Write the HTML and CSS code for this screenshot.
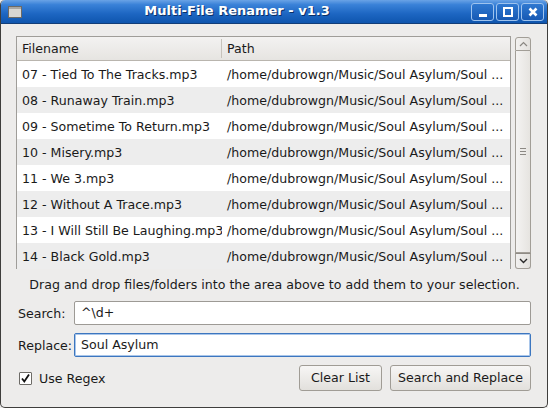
FILE: index.html
```html
<!DOCTYPE html>
<html>
<head>
<meta charset="utf-8">
<link rel="stylesheet" href="styles.css">
</head>
<body>
<div class="window">
  <div class="titlebar">
    <svg class="appicon" width="14" height="12" viewBox="0 0 14 12">
      <rect x="0.5" y="0.5" width="13" height="11" fill="#d8d6d2" stroke="#6c6a66"/>
      <rect x="1" y="1" width="12" height="2" fill="#a9a7a3"/>
    </svg>
    <div class="title">Multi-File Renamer - v1.3</div>
    <div class="wbtns">
      <div class="wbtn"><svg width="12" height="12" viewBox="0 0 12 12"><rect x="2" y="8" width="8" height="3" fill="#fff"/></svg></div>
      <div class="wbtn"><svg width="12" height="12" viewBox="0 0 12 12"><rect x="2" y="2" width="8" height="8" fill="none" stroke="#fff" stroke-width="2"/></svg></div>
      <div class="wbtn"><svg width="12" height="12" viewBox="0 0 12 12"><path d="M2.5 2.5 L9.5 9.5 M9.5 2.5 L2.5 9.5" stroke="#fff" stroke-width="2.6"/></svg></div>
    </div>
  </div>
  <div class="content">
    <div class="listarea">
      <div class="tree">
        <div class="thead">
          <div class="col c1">Filename</div>
          <div class="col c2">Path</div>
        </div>
        <div class="row"><div class="col c1">07 - Tied To The Tracks.mp3</div><div class="col c2">/home/dubrowgn/Music/Soul Asylum/Soul ...</div></div>
        <div class="row alt"><div class="col c1">08 - Runaway Train.mp3</div><div class="col c2">/home/dubrowgn/Music/Soul Asylum/Soul ...</div></div>
        <div class="row"><div class="col c1">09 - Sometime To Return.mp3</div><div class="col c2">/home/dubrowgn/Music/Soul Asylum/Soul ...</div></div>
        <div class="row alt"><div class="col c1">10 - Misery.mp3</div><div class="col c2">/home/dubrowgn/Music/Soul Asylum/Soul ...</div></div>
        <div class="row"><div class="col c1">11 - We 3.mp3</div><div class="col c2">/home/dubrowgn/Music/Soul Asylum/Soul ...</div></div>
        <div class="row alt"><div class="col c1">12 - Without A Trace.mp3</div><div class="col c2">/home/dubrowgn/Music/Soul Asylum/Soul ...</div></div>
        <div class="row"><div class="col c1">13 - I Will Still Be Laughing.mp3</div><div class="col c2">/home/dubrowgn/Music/Soul Asylum/Soul ...</div></div>
        <div class="row alt"><div class="col c1">14 - Black Gold.mp3</div><div class="col c2">/home/dubrowgn/Music/Soul Asylum/Soul ...</div></div>
      </div>
      <div class="scrollbar">
        <div class="sbtn up"><svg width="9" height="6" viewBox="0 0 9 6"><path d="M1 5 L4.5 1.5 L8 5" fill="none" stroke="#8a8782" stroke-width="1.2"/></svg></div>
        <div class="slider"><span class="grip"></span></div>
        <div class="sbtn down"><svg width="9" height="6" viewBox="0 0 9 6"><path d="M1 1 L4.5 4.5 L8 1" fill="none" stroke="#2a2a2a" stroke-width="1.4"/></svg></div>
      </div>
    </div>
    <div class="hint">Drag and drop files/folders into the area above to add them to your selection.</div>
    <div class="field">
      <label class="flabel">Search:</label>
      <div class="entry">^\d+</div>
    </div>
    <div class="field">
      <label class="flabel">Replace:</label>
      <div class="entry focus">Soul Asylum</div>
    </div>
    <div class="actions">
      <div class="check">
        <span class="box"><svg width="11" height="11" viewBox="0 0 11 11"><path d="M2 5.5 L4.3 8.5 L9 1.5" fill="none" stroke="#111" stroke-width="1.8"/></svg></span>
        <span>Use Regex</span>
      </div>
      <div class="spacer"></div>
      <div class="button b1">Clear List</div>
      <div class="button b2">Search and Replace</div>
    </div>
  </div>
</div>
</body>
</html>
```

FILE: styles.css
```css
* { box-sizing: border-box; }
html, body { margin: 0; padding: 0; background: #edeceb; }
body {
  width: 548px; height: 408px; overflow: hidden;
  font-family: "DejaVu Sans", sans-serif; font-size: 12.6px; color: #1a1a1a;
}
.window {
  width: 548px; height: 408px;
  background: #edeceb;
  border: 1px solid #3f3e3c;
  border-top: none;
  border-radius: 5px 5px 5px 5px;
  overflow: hidden;
  display: flex; flex-direction: column;
}
.titlebar {
  height: 24px; flex: none;
  margin: 0 -1px;
  background: linear-gradient(#6aa3e6 0%, #3a82d8 20%, #1d66c2 60%, #0f55ae 100%);
  border-bottom: 1px solid #123d78;
  border-radius: 5px 5px 0 0;
  display: flex; align-items: center;
  position: relative;
}
.appicon { margin-left: 8px; margin-top: 1px; }
.title {
  position: absolute; left: 0; right: 0; top: 3px;
  padding-right: 74px;
  text-align: center; color: #fff; font-weight: bold; font-size: 13px;
  text-shadow: 1px 1px 0 #0a2f66;
}
.wbtns { margin-left: auto; margin-right: 4px; display: flex; gap: 2px; margin-top: 1px; }
.wbtn {
  width: 23px; height: 18px;
  border: 1px solid #9ec3ee;
  border-radius: 3px;
  background: linear-gradient(#2f78d0, #1659b4);
  display: flex; align-items: center; justify-content: center;
}
.content {
  flex: 1; padding: 12px 16px 0 15px;
  display: flex; flex-direction: column;
}
.listarea { display: flex; gap: 4px; height: 233px; }
.tree {
  width: 496px; border: 1px solid #9f9d99; background: #fff;
  display: flex; flex-direction: column;
}
.thead {
  height: 24px; display: flex; flex: none;
  background: linear-gradient(#f3f2f1, #e6e4e1);
  border-bottom: 1px solid #b9b5ae;
}
.thead .c1 { border-right: 1px solid #c7c3bc; margin: 2px 0; line-height: 19px; }
.thead .c2 { line-height: 23px; }
.row { height: 26px; display: flex; line-height: 27px; flex: none; }
.row.alt { background: #ededed; }
.col { white-space: nowrap; overflow: hidden; }
.c1 { width: 205px; padding-left: 5px; }
.c2 { flex: 1; padding-left: 5px; }
.scrollbar {
  width: 16px; display: flex; flex-direction: column; margin-top: 1px;
}
.sbtn {
  height: 14px; border: 1px solid #a29e97; background: linear-gradient(90deg, #f2f1f0, #e3e1dd);
  display: flex; align-items: center; justify-content: center;
}
.sbtn.up { border-radius: 3px 3px 0 0; }
.sbtn.down { height: 16px; border-radius: 0 0 3px 3px; border-top-color: #8f8b85; }
.slider {
  flex: 1; border-left: 1px solid #a29e97; border-right: 1px solid #a29e97;
  background: linear-gradient(90deg, #f4f3f2, #e6e4e0);
  display: flex; align-items: center; justify-content: center;
  border-bottom: 1px solid #a29e97;
}
.grip {
  width: 6px; height: 7px;
  background: linear-gradient(#8c8984 0 1px, transparent 1px 3px, #8c8984 3px 4px, transparent 4px 6px, #8c8984 6px 7px);
}
.hint { text-align: center; margin-top: 8px; line-height: 16px; padding-left: 2px; }
.field { display: flex; align-items: center; margin-top: 8px; }
.field + .field { margin-top: 8px; }
.flabel { width: 58px; flex: none; padding-left: 2px; }
.entry {
  flex: 1; height: 24px; border: 1px solid #9d9a95; border-radius: 2px; background: #fff;
  padding-left: 6px; line-height: 22px;
}
.entry.focus { border-color: #3c76bf; box-shadow: inset 0 0 0 1px #a9c6ea; }
.actions { display: flex; align-items: center; margin-top: 8px; height: 26px; }
.check { display: flex; align-items: center; gap: 7px; padding-left: 3px; }
.box {
  width: 13px; height: 13px; border: 1px solid #6d6b67; background: #fff;
  display: flex; align-items: center; justify-content: center; border-radius: 1px;
}
.spacer { flex: 1; }
.button {
  height: 26px; border: 1px solid #a09c95; border-radius: 3px;
  background: linear-gradient(#f7f6f5, #e2e0dc);
  line-height: 24px; text-align: center;
}
.b1 { width: 83px; margin-right: 8px; }
.b2 { width: 141px; }
```
